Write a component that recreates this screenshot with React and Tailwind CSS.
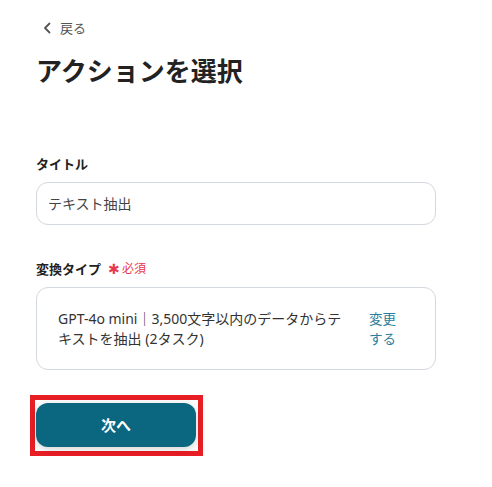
export default function App() {
  return (
    <div className="min-h-screen bg-white pl-[36px] pt-[18px] font-['Noto_Sans','Noto_Sans_CJK_JP',sans-serif] text-[#222]">
      <a className="flex h-[20px] items-center gap-[9px] pl-[7px] text-[13px] leading-[20px] text-[#555]">
        <svg width="8" height="12" viewBox="0 0 8 12" fill="none">
          <path d="M6.5 1.5L2 6l4.5 4.5" stroke="#555" strokeWidth="1.8" strokeLinecap="round" strokeLinejoin="round" />
        </svg>
        <span>戻る</span>
      </a>

      <h1 className="mt-[15px] text-[26px] font-bold leading-[36px] text-[#222]">アクションを選択</h1>

      <div className="mt-[65px] w-[400px]">
        <label className="block text-[13px] font-bold leading-[20px] text-[#222]">タイトル</label>
        <div className="mt-[8px] flex h-[43px] items-center rounded-[12px] border border-[#d3d7de] px-[11px] text-[14px] text-[#444]">
          テキスト抽出
        </div>

        <div className="mt-[34px] flex items-center gap-[7px] leading-[20px]">
          <span className="text-[13px] font-bold text-[#222]">変換タイプ</span>
          <span className="flex items-center gap-[2px] text-[12px] text-[#e8384f]">
            <span className="text-[14px] leading-none">✱</span>
            <span>必須</span>
          </span>
        </div>
        <div className="mt-[8px] flex gap-[14px] rounded-[12px] border border-[#d3d7de] pb-[20px] pl-[21px] pr-[38px] pt-[21px] text-[14px] leading-[20px]">
          <p className="flex-1 text-[#333]">GPT-4o mini｜3,500文字以内のデータからテキストを抽出 (2タスク)</p>
          <button className="w-[28px] shrink-0 text-left text-[13.5px] leading-[20px] text-[#2a7d9c]">変更する</button>
        </div>
      </div>

      <div className="-ml-[6px] mt-[25px] inline-flex border-[5px] border-[#e81e25] pb-[4px] pl-[1px] pr-[2px] pt-[3px]">
        <button className="flex h-[44px] w-[160px] items-center justify-center rounded-[12px] bg-[#0b6780] text-[15px] font-bold text-white shadow-[0_2px_8px_rgba(0,0,0,0.18)]">
          次へ
        </button>
      </div>
    </div>
  )
}
